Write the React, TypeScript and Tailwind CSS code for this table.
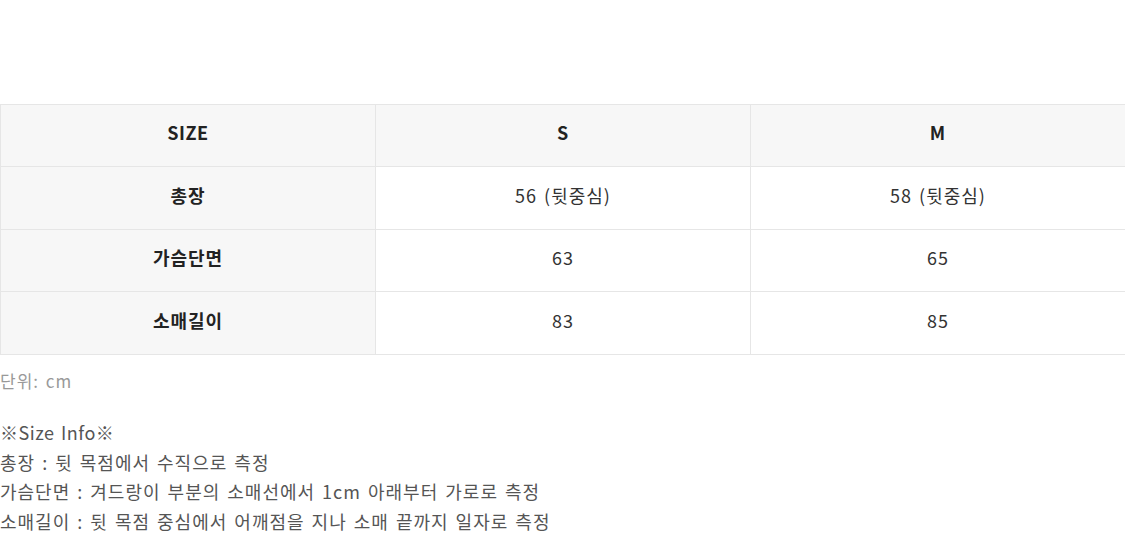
import React from "react";

const rows = [
  { label: "총장", s: "56 (뒷중심)", m: "58 (뒷중심)" },
  { label: "가슴단면", s: "63", m: "65" },
  { label: "소매길이", s: "83", m: "85" },
];

export default function App() {
  const font = { fontFamily: '"Noto Sans CJK KR", "Noto Sans", sans-serif' };
  const cell = "border border-[#e6e6e6] text-center pb-[6px]";
  return (
    <div className="w-[1125px] h-[560px] bg-white tracking-[1px] [word-spacing:2px]" style={font}>
      <div className="pt-[104px]">
        <table className="w-[1125px] border-collapse table-fixed text-[18px] text-[#333]">
          <colgroup>
            <col className="w-[375px]" />
            <col className="w-[375px]" />
            <col className="w-[375px]" />
          </colgroup>
          <tbody>
            <tr className="h-[62px] bg-[#f7f7f7]">
              <td className={`${cell} font-bold text-[#222] tracking-[0.5px]`}>SIZE</td>
              <td className={`${cell} font-bold text-[#222]`}>S</td>
              <td className={`${cell} font-bold text-[#222]`}>M</td>
            </tr>
            {rows.map((r, i) => (
              <tr key={i} className={i === 1 ? "h-[62px]" : "h-[63px]"}>
                <td className={`${cell} bg-[#f7f7f7] font-bold text-[#222]`}>{r.label}</td>
                <td className={cell}>{r.s}</td>
                <td className={cell}>{r.m}</td>
              </tr>
            ))}
          </tbody>
        </table>
        <div className="mt-[14px] text-[17px] leading-[24px] text-[#999]">단위: cm</div>
        <div className="mt-[25px] text-[18px] leading-[29.5px] text-[#555]">
          <div className="tracking-[0.5px]">※Size Info※</div>
          <div>총장 : 뒷 목점에서 수직으로 측정</div>
          <div>가슴단면 : 겨드랑이 부분의 소매선에서 1cm 아래부터 가로로 측정</div>
          <div>소매길이 : 뒷 목점 중심에서 어깨점을 지나 소매 끝까지 일자로 측정</div>
        </div>
      </div>
    </div>
  );
}
